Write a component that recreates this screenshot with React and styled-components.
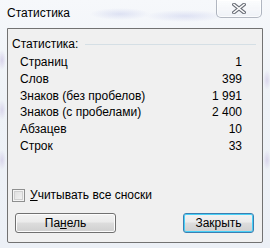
import React from 'react'
import styled, { createGlobalStyle } from 'styled-components'

const GlobalStyle = createGlobalStyle`
    html, body {
        margin: 0;
        padding: 0;
        background: #eef1f5;
    }
    body {
        font-family: "Liberation Sans", "Noto Sans", sans-serif;
        font-size: 12px;
        color: #000;
    }
`

const Frame = styled.div`
    width: 270px;
    height: 248px;
    box-sizing: border-box;
    display: flex;
    flex-direction: column;
    padding: 0 7px 5px 7px;
    background:
        radial-gradient(ellipse 30px 6px at 120px 14px, rgba(150, 160, 220, 0.25), transparent),
        radial-gradient(ellipse 40px 6px at 185px 16px, rgba(140, 150, 220, 0.22), transparent),
        radial-gradient(ellipse 4px 10px at 2px 60px, rgba(170, 150, 210, 0.35), transparent),
        radial-gradient(ellipse 4px 10px at 2px 110px, rgba(170, 150, 210, 0.3), transparent),
        radial-gradient(ellipse 4px 10px at 2px 160px, rgba(170, 150, 210, 0.3), transparent),
        radial-gradient(ellipse 4px 10px at 267px 80px, rgba(170, 150, 210, 0.3), transparent),
        radial-gradient(ellipse 4px 10px at 267px 160px, rgba(170, 150, 210, 0.3), transparent),
        linear-gradient(180deg, #f6f8fb 0%, #eef2f7 40%, #ecf0f6 100%);
`

const TitleBar = styled.div`
    height: 28px;
    display: flex;
    align-items: flex-start;
    justify-content: space-between;
`

const Title = styled.div`
    padding-top: 6px;
    line-height: 15px;
    color: #000;
`

const CloseButton = styled.div`
    width: 46px;
    height: 18px;
    box-sizing: border-box;
    margin-right: 1px;
    border: 1px solid rgba(90, 100, 120, 0.45);
    border-top: none;
    border-radius: 0 0 5px 5px;
    background: linear-gradient(180deg, rgba(255,255,255,0.7), rgba(235,238,244,0.6));
    box-shadow: inset 0 0 0 1px rgba(255,255,255,0.7);
    display: flex;
    align-items: center;
    justify-content: center;
`

const Client = styled.div`
    flex: 1;
    display: flex;
    flex-direction: column;
    background: #f0f0f0;
    border: 1px solid #727272;
    border-radius: 0 0 2px 2px;
    padding: 8px 0 9px 4px;
`

const GroupHeader = styled.div`
    display: flex;
    align-items: center;
    gap: 7px;
    line-height: 15px;
    margin-right: 6px;

    &::after {
        content: '';
        flex: 1;
        height: 1px;
        background: #d5dfe5;
    }
`

const Stats = styled.div`
    margin: 2px 20px 0 8px;
    display: flex;
    flex-direction: column;
`

const StatRow = styled.div`
    display: flex;
    justify-content: space-between;
    height: 16.8px;
    line-height: 17px;
`

const Spacer = styled.div`
    flex: 1;
`

const CheckRow = styled.label`
    display: flex;
    align-items: center;
    gap: 5px;
    height: 14px;
    margin-bottom: 11px;
`

const CheckBox = styled.span`
    width: 13px;
    height: 13px;
    box-sizing: border-box;
    border: 1px solid #8e8f8f;
    background: linear-gradient(135deg, #dcdcdc, #f6f6f6);
    box-shadow: inset 0 0 0 1px #f4f4f4, inset 0 0 0 2px #d0d0d0;
`

const Mnemonic = styled.span`
    text-decoration: underline;
`

const Buttons = styled.div`
    display: flex;
    justify-content: space-between;
    padding: 0 8px 0 3px;
`

const Button = styled.div`
    width: ${p => p.$width}px;
    height: 20px;
    box-sizing: border-box;
    border: 1px solid ${p => (p.$default ? '#3c7fb1' : '#707070')};
    border-radius: 3px;
    background: linear-gradient(180deg, #f2f2f2 0%, #ebebeb 45%, #dddddd 50%, #cfcfcf 100%);
    box-shadow: inset 0 0 0 1px ${p => (p.$default ? '#48d0f7' : '#fcfcfc')};
    display: flex;
    align-items: center;
    justify-content: center;
    line-height: 15px;
`

const stats = [
    ['Страниц', '1'],
    ['Слов', '399'],
    ['Знаков (без пробелов)', '1 991'],
    ['Знаков (с пробелами)', '2 400'],
    ['Абзацев', '10'],
    ['Строк', '33'],
]

const CloseGlyph = () => (
    <svg width="14" height="11" viewBox="0 0 14 11">
        <path d="M2 1.5 L12 9.5 M12 1.5 L2 9.5" stroke="#6b6f78" strokeWidth="3.6" strokeLinecap="square" fill="none" />
        <path d="M2 1.5 L12 9.5 M12 1.5 L2 9.5" stroke="#ffffff" strokeWidth="1.6" strokeLinecap="square" fill="none" />
    </svg>
)

const App = () => {
    return (
        <Frame>
            <GlobalStyle />
            <TitleBar>
                <Title>Статистика</Title>
                <CloseButton><CloseGlyph /></CloseButton>
            </TitleBar>
            <Client>
                <GroupHeader>Статистика:</GroupHeader>
                <Stats>
                    {stats.map(([label, value]) => (
                        <StatRow key={label}>
                            <span>{label}</span>
                            <span>{value}</span>
                        </StatRow>
                    ))}
                </Stats>
                <Spacer />
                <CheckRow>
                    <CheckBox />
                    <span><Mnemonic>У</Mnemonic>читывать все сноски</span>
                </CheckRow>
                <Buttons>
                    <Button $width={101}>Па<Mnemonic>н</Mnemonic>ель</Button>
                    <Button $width={71} $default>Закрыть</Button>
                </Buttons>
            </Client>
        </Frame>
    )
}

export default App
